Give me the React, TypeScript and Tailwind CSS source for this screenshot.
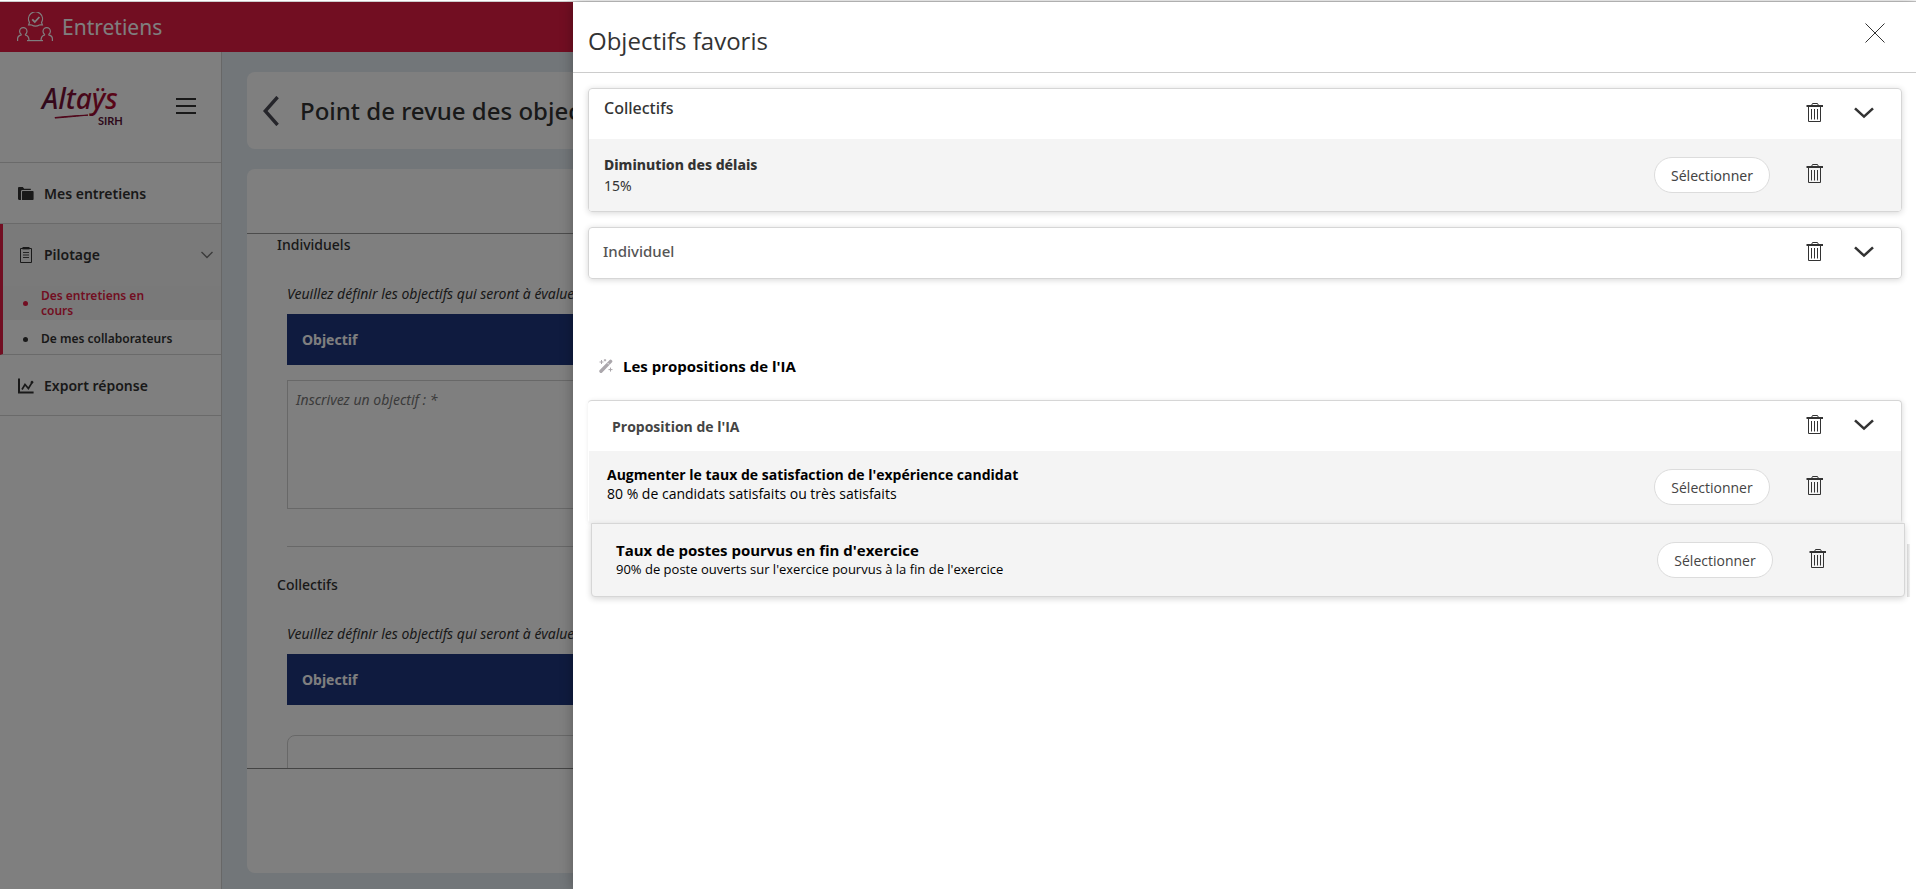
import type { ReactNode } from "react";

const sansFont = "font-['Noto_Sans','Open_Sans',sans-serif]";
const proposalFont = "font-['Open_Sans','Noto_Sans',sans-serif]";

function MeetingIcon() {
  return (
    <svg width="36" height="30" viewBox="0 0 36 30" fill="none" stroke="currentColor" strokeWidth="1.2" aria-hidden="true">
      <path d="M14.6 12.9h-3l.9-2.4a7 7 0 1 1 12 0l.9 2.4h-3M14.6 12.9a7.4 7.4 0 0 0 7.8 0" />
      <path d="M15.2 7.4l2.6 2.6 4.6-5" strokeWidth="1.8" />
      <path d="M4.6 22.8C3.2 21.6 2.6 20.6 2.6 19.4a3.7 3.7 0 0 1 7.4 0c0 1.2-.6 2.2-2 3.4M.6 29v-2.2c0-2.4 1.6-3.6 4-4M8 22.8c2.4.4 4 1.8 4 5.6" />
      <path d="M28 22.8c-1.4-1.2-2-2.2-2-3.4a3.7 3.7 0 0 1 7.4 0c0 1.2-.6 2.2-2 3.4M24 28.4c0-3.8 1.6-5.2 4-5.6M31.4 22.8c2.4.4 4 1.6 4 4V29" />
      <path d="M10 28.6h16" />
    </svg>
  );
}

function Logo() {
  return (
    <svg className="overflow-visible" width="84" height="50" viewBox="0 0 84 50" role="img" aria-label="Altaÿs SIRH">
      <defs>
        <linearGradient id="logo" x1="0" x2="1">
          <stop offset="0" stopColor="#5c1238" />
          <stop offset="1" stopColor="#b80a30" />
        </linearGradient>
      </defs>
      <text x="2" y="28" fontSize="28" fontStyle="italic" fontWeight="500" fontFamily="Noto Sans, Lato, sans-serif" fill="url(#logo)">Altaÿs</text>
      <path d="M15 36.5c11-1 21-2 33-2.4-10 1-20 2-33 3z" fill="#a00c34" stroke="#a00c34" />
      <text x="58" y="44" fontSize="11" fontWeight="700" fontFamily="Lato, sans-serif" fill="#5c1238">SIRH</text>
    </svg>
  );
}

function TrashIcon() {
  return (
    <svg width="18" height="20" viewBox="0 0 18 20" fill="none" stroke="#333" aria-hidden="true">
      <path d="M5.5 2.5l1-2h5l1 2" />
      <path d="M.5 3h16.5" strokeWidth="2" />
      <path d="M2.5 4v14.5h12V4" />
      <path d="M5.5 6v10.5M8.5 6v10.5M11.5 6v10.5" />
    </svg>
  );
}

function ChevronDown() {
  return (
    <svg width="20" height="12" viewBox="0 0 20 12" fill="none" stroke="#333" strokeWidth="2.6" aria-hidden="true">
      <path d="M1 1.4l9 8.2 9-8.2" />
    </svg>
  );
}

function WandIcon() {
  return (
    <svg width="14" height="14" viewBox="0 0 14 14" fill="none" stroke="#aba7ac" aria-hidden="true">
      <path d="M2 12.2L11.6 2.4" strokeWidth="3.4" strokeLinecap="round" />
      <path d="M8.6 4l1.6 1.6" stroke="#fff" strokeWidth=".8" />
      <path d="M2.5 1v4M.5 3h4M6 0v2.4M4.8 1.2h2.4M11.5 8.6v4M9.5 10.6h4" />
    </svg>
  );
}

function FolderIcon() {
  return (
    <svg width="16" height="14" viewBox="0 0 16 14" fill="#333" aria-hidden="true">
      <path d="M0 1.2C0 .5.5 0 1.2 0h3.6l1.4 1.8h6.6V3H4.6C3.4 3 3 3.6 3 4.6V13H1.2C.5 13 0 12.5 0 11.8z" />
      <path d="M4 5c0-.6.4-1 1-1h9.6c.6 0 1 .4 1 1v7c0 .6-.4 1-1 1H4z" />
    </svg>
  );
}

function ClipboardIcon() {
  return (
    <svg width="16" height="16" viewBox="0 0 16 16" fill="none" stroke="#333" aria-hidden="true">
      <path d="M2.5 1.5h11v14h-11z" />
      <path d="M4.5 1.2h7" strokeWidth="2.4" />
      <path d="M5 5.5h6M5 8h6M5 10.5h6" strokeWidth=".9" />
    </svg>
  );
}

function ChartIcon() {
  return (
    <svg width="16" height="16" viewBox="0 0 16 16" fill="none" stroke="#333" strokeWidth="2" aria-hidden="true">
      <path d="M1 .5V14.6h14.6" />
      <path d="M4 11.5l3-5 3.4 4 4-6.6" strokeWidth="1.7" />
      <circle cx="14" cy="4.2" r="1" fill="#333" strokeWidth="1" />
    </svg>
  );
}

function Sidebar() {
  return (
    <aside className="w-[222px] shrink-0 border-r border-[#cfcfcf] bg-white text-sm font-semibold text-[#333]">
      <div className="flex h-[111px] items-center justify-between border-b border-[#d4d4d4] pr-[25px] pb-0.5 pl-10">
        <Logo />
        <button aria-label="Menu" className="flex flex-col gap-[5px]">
          <span className="h-0.5 w-5 bg-[#333]" />
          <span className="h-0.5 w-5 bg-[#333]" />
          <span className="h-0.5 w-5 bg-[#333]" />
        </button>
      </div>
      <nav>
        <a href="#mes-entretiens" className="flex h-[61px] items-center gap-[10px] border-b border-[#d4d4d4] pt-0.5 pl-[18px]">
          <FolderIcon />
          Mes entretiens
        </a>
        <div className="border-b border-l-3 border-b-[#d4d4d4] border-l-[#e41c44]">
          <a href="#pilotage" className="flex h-[62px] items-center gap-[10px] bg-[#f5f5f5] pr-2 pl-[15px]">
            <ClipboardIcon />
            Pilotage
            <svg className="ml-auto text-[#777]" width="12" height="8" viewBox="0 0 12 8" fill="none" stroke="currentColor" strokeWidth="1.4" aria-hidden="true">
              <path d="M.5 1l5.5 5.4L11.5 1" />
            </svg>
          </a>
          <a href="#en-cours" className="flex h-[34px] items-center gap-[13px] bg-[#f3f3f3] pr-16 pl-5 text-xs leading-[15px] text-[#e41c44]">
            <span className="size-[5px] shrink-0 rounded-full bg-current" />
            Des entretiens en cours
          </a>
          <a href="#collaborateurs" className="flex h-[34px] items-center gap-[13px] pt-1 pl-5 text-xs">
            <span className="size-[5px] shrink-0 rounded-full bg-current" />
            De mes collaborateurs
          </a>
        </div>
        <a href="#export" className="flex h-[61px] items-center gap-[10px] border-b border-[#d4d4d4] pt-0.5 pl-[18px]">
          <ChartIcon />
          Export réponse
        </a>
      </nav>
    </aside>
  );
}

function ObjectiveSection({ title, children }: { title: string; children: ReactNode }) {
  return (
    <section className="pl-[30px]">
      <h2 className="h-[22px] text-sm leading-[22px] font-medium">{title}</h2>
      <div className="pt-[27px] pl-[10px]">
        <p className="h-[31px] text-sm leading-[22px] whitespace-nowrap italic">Veuillez définir les objectifs qui seront à évaluer</p>
        <div className="flex h-[51px] items-center bg-[#1e367e] pl-[15px] text-sm font-bold text-white">Objectif</div>
        {children}
      </div>
    </section>
  );
}

function ReviewPage() {
  return (
    <main className="flex min-w-0 flex-1 flex-col gap-5 overflow-hidden bg-[#e4ecf2] pt-5 pr-6 pb-4 pl-[25px] text-[#333]">
      <div className="flex h-[77px] shrink-0 items-center gap-[21px] rounded-lg bg-white pl-4">
        <button aria-label="Retour">
          <svg width="16" height="30" viewBox="0 0 16 30" fill="none" stroke="#4a4a55" strokeWidth="3.4" aria-hidden="true">
            <path d="M14.6 1L2.2 15l12.4 14" />
          </svg>
        </button>
        <h1 className="text-2xl font-medium whitespace-nowrap">Point de revue des objectifs</h1>
      </div>
      <div className="flex min-h-0 flex-1 flex-col rounded-lg bg-white">
        <div className="h-[65px] shrink-0 border-b border-[#999]" />
        <div className="min-h-0 flex-1 overflow-hidden">
          <ObjectiveSection title="Individuels">
            <textarea
              aria-label="Objectif individuel"
              placeholder="Inscrivez un objectif : *"
              className="mt-[15px] block h-[129px] w-full resize-none border border-[#d0d0d0] px-2 py-2 text-sm leading-[22px] italic placeholder:text-[#777]"
            />
            <hr className="mt-[37px] mb-[27px] border-[#d0d0d0]" />
          </ObjectiveSection>
          <ObjectiveSection title="Collectifs">
            <div className="mt-[30px] h-40 rounded-lg border border-[#d0d0d0]" />
          </ObjectiveSection>
        </div>
        <div className="h-[105px] shrink-0 border-t border-[#888]" />
      </div>
    </main>
  );
}

function CardHeader({ children }: { children: ReactNode }) {
  return (
    <div className="flex h-[50px] items-center pr-[27px] pb-[3px]">
      {children}
      <button aria-label="Supprimer la liste" className="ml-auto">
        <TrashIcon />
      </button>
      <button aria-label="Déplier" className="ml-[30px]">
        <ChevronDown />
      </button>
    </div>
  );
}

function RowActions() {
  return (
    <div className="ml-auto flex items-center gap-9 pr-[77px]">
      <button className="h-9 w-[116px] rounded-full border border-[#dcdcdc] bg-white pt-0.5 text-sm text-[#444]">Sélectionner</button>
      <button aria-label="Supprimer" className="pb-[3px]">
        <TrashIcon />
      </button>
    </div>
  );
}

function FavoritesDrawer() {
  return (
    <div role="dialog" aria-label="Objectifs favoris" className="absolute inset-y-0 right-0 left-[573px] bg-white text-[#333] shadow-[0_0_12px_rgba(0,0,0,0.3)]">
      <header className="flex h-[71px] items-center justify-between border-b border-[#ccc] pr-[31px] pl-[15px]">
        <h2 className={`${proposalFont} pt-2 text-2xl`}>Objectifs favoris</h2>
        <button aria-label="Fermer" className="pb-[9px]">
          <svg width="20" height="20" viewBox="0 0 20 20" stroke="#333" aria-hidden="true">
            <path d="M.5.5l19 19M19.5.5l-19 19" />
          </svg>
        </button>
      </header>
      <div className="pt-[15px] pr-[14px] pl-[15px]">
        <section className="overflow-hidden rounded-[4px] border border-[#d6d6d6] shadow-[0_1px_6px_rgba(0,0,0,0.16)]">
          <CardHeader>
            <h3 className="pb-2.5 pl-[15px] font-medium">Collectifs</h3>
          </CardHeader>
          <div className="flex h-[72px] items-center bg-[#f4f4f4] pl-[15px]">
            <div className="text-sm leading-[21px]">
              <p className="font-extrabold">Diminution des délais</p>
              <p>15%</p>
            </div>
            <RowActions />
          </div>
        </section>
        <section className="mt-[15px] rounded-[4px] border border-[#d6d6d6] shadow-[0_1px_6px_rgba(0,0,0,0.16)]">
          <CardHeader>
            <h3 className="pl-[14px] text-[15px] font-medium text-[#555]">Individuel</h3>
          </CardHeader>
        </section>
        <div className={`${proposalFont} text-black`}>
          <div className="mt-[75px] mb-[22px] flex h-6 items-center gap-[10px] pl-[11px]">
            <WandIcon />
            <h2 className="text-[15px] font-bold">Les propositions de l'IA</h2>
          </div>
          <section className="rounded-[4px] border-t border-r border-[#d6d6d6] shadow-[1px_1px_5px_rgba(0,0,0,0.12)]">
            <CardHeader>
              <h3 className="pt-1 pl-6 text-sm font-bold text-[#444]">Proposition de l'IA</h3>
            </CardHeader>
            <div className="ml-px flex h-[72px] items-center bg-[#f4f4f4] pl-[18px]">
              <div className="pb-1.5 text-sm leading-[19px]">
                <p className="font-bold">Augmenter le taux de satisfaction de l'expérience candidat</p>
                <p>80 % de candidats satisfaits ou très satisfaits</p>
              </div>
              <RowActions />
            </div>
          </section>
          <div className="relative -mr-[3px] ml-[3px] flex h-[74px] items-center rounded-b-[4px] border border-[#d6d6d6] bg-[#f4f4f4] pl-6 shadow-[0_2px_6px_rgba(0,0,0,0.16)]">
            <div className="text-[13px] leading-[19px]">
              <p className="text-[15px] font-bold">Taux de postes pourvus en fin d'exercice</p>
              <p>90% de poste ouverts sur l'exercice pourvus à la fin de l'exercice</p>
            </div>
            <RowActions />
            <span className="absolute top-5 -right-[6px] -bottom-px w-[3px] bg-gradient-to-r from-[#d2d2d2] to-[#f2f2f2]" />
          </div>
        </div>
      </div>
    </div>
  );
}

export default function App() {
  return (
    <div className={`${sansFont} flex h-screen flex-col overflow-hidden`}>
      <div className="h-0.5 shrink-0 border-b border-[#ccc] bg-white" />
      <div className="relative flex min-h-0 flex-1 flex-col">
        <header className="flex h-[50px] shrink-0 items-center gap-[9px] bg-[#e41c44] pl-[17px] text-white">
          <MeetingIcon />
          <span className="pt-0.5 text-[21px]">Entretiens</span>
        </header>
        <div className="flex min-h-0 flex-1">
          <Sidebar />
          <ReviewPage />
        </div>
        <div className="absolute inset-0 bg-black/50" />
        <FavoritesDrawer />
      </div>
    </div>
  );
}
